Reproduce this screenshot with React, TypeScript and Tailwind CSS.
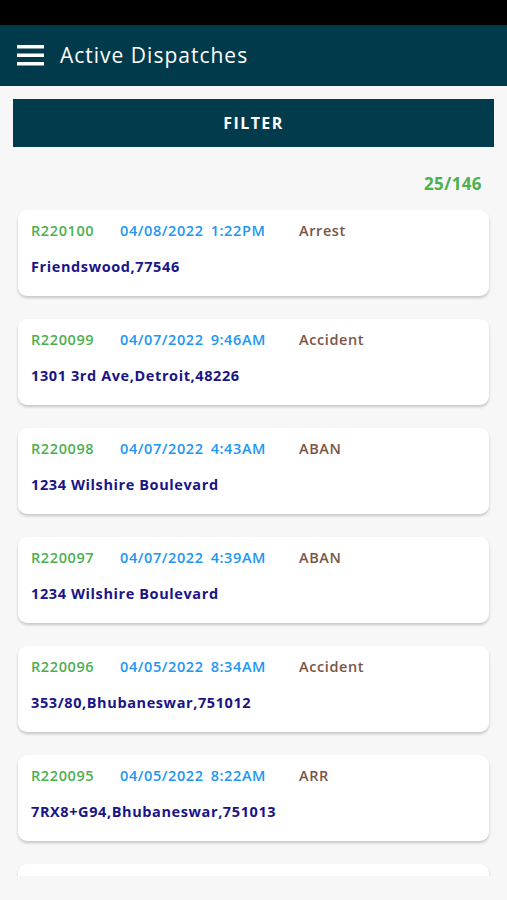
const dispatches = [
  { id: "R220100", date: "04/08/2022", time: "1:22PM", type: "Arrest", address: "Friendswood,77546" },
  { id: "R220099", date: "04/07/2022", time: "9:46AM", type: "Accident", address: "1301 3rd Ave,Detroit,48226" },
  { id: "R220098", date: "04/07/2022", time: "4:43AM", type: "ABAN", address: "1234 Wilshire Boulevard" },
  { id: "R220097", date: "04/07/2022", time: "4:39AM", type: "ABAN", address: "1234 Wilshire Boulevard" },
  { id: "R220096", date: "04/05/2022", time: "8:34AM", type: "Accident", address: "353/80,Bhubaneswar,751012" },
  { id: "R220095", date: "04/05/2022", time: "8:22AM", type: "ARR", address: "7RX8+G94,Bhubaneswar,751013" },
];

function MenuIcon() {
  return (
    <svg width="27" height="21" viewBox="0 0 27 21" fill="white">
      <rect x="0" y="0" width="27" height="3.5" />
      <rect x="0" y="8.5" width="27" height="3.5" />
      <rect x="0" y="17" width="27" height="3.5" />
    </svg>
  );
}

function DispatchCard({ d }: { d: (typeof dispatches)[number] }) {
  return (
    <div className="h-[86px] shrink-0 rounded-[9px] bg-white px-[13px] pt-[11px] shadow-[0_2px_3px_rgba(0,0,0,0.2)]">
      <div className="flex items-center text-[14.5px] font-semibold leading-[20px] tracking-[0.6px]">
        <span className="w-[89px] text-[#4caf50]">{d.id}</span>
        <span className="flex w-[179px] gap-[7px] text-[#2196f3]">
          <span>{d.date}</span>
          <span>{d.time}</span>
        </span>
        <span className="text-[#795548]">{d.type}</span>
      </div>
      <div className="mt-[16px] text-[14.5px] font-bold leading-[20px] tracking-[0.6px] text-[#1a1487]">
        {d.address}
      </div>
    </div>
  );
}

export default function App() {
  return (
    <div
      className="flex h-[900px] w-[507px] flex-col overflow-hidden bg-[#f7f7f7]"
      style={{ fontFamily: "'Open Sans', 'Liberation Sans', sans-serif" }}
    >
      <div className="h-[25px] shrink-0 bg-black" />
      <header className="flex h-[61px] shrink-0 items-center gap-[16px] bg-[#013b4b] pl-[17px]">
        <MenuIcon />
        <h1 className="text-[21px] font-medium tracking-[1px] text-white">Active Dispatches</h1>
      </header>

      <div className="px-[13px] pt-[13px]">
        <button className="flex h-[48px] w-full items-center justify-center bg-[#023c4c] text-[16px] font-bold tracking-[1.4px] text-white">
          FILTER
        </button>
      </div>

      <div className="flex justify-end pr-[25px] pt-[24px] text-[17px] font-bold tracking-[0.4px] text-[#4caf50]">
        25/146
      </div>

      <div className="mb-[24px] mt-[9px] flex min-h-0 flex-1 flex-col gap-[23px] overflow-hidden px-[18px] pt-[4px]">
        {dispatches.map((d) => (
          <DispatchCard key={d.id} d={d} />
        ))}
        <div className="h-[86px] shrink-0 rounded-[9px] bg-white shadow-[0_2px_3px_rgba(0,0,0,0.2)]" />
      </div>
    </div>
  );
}
